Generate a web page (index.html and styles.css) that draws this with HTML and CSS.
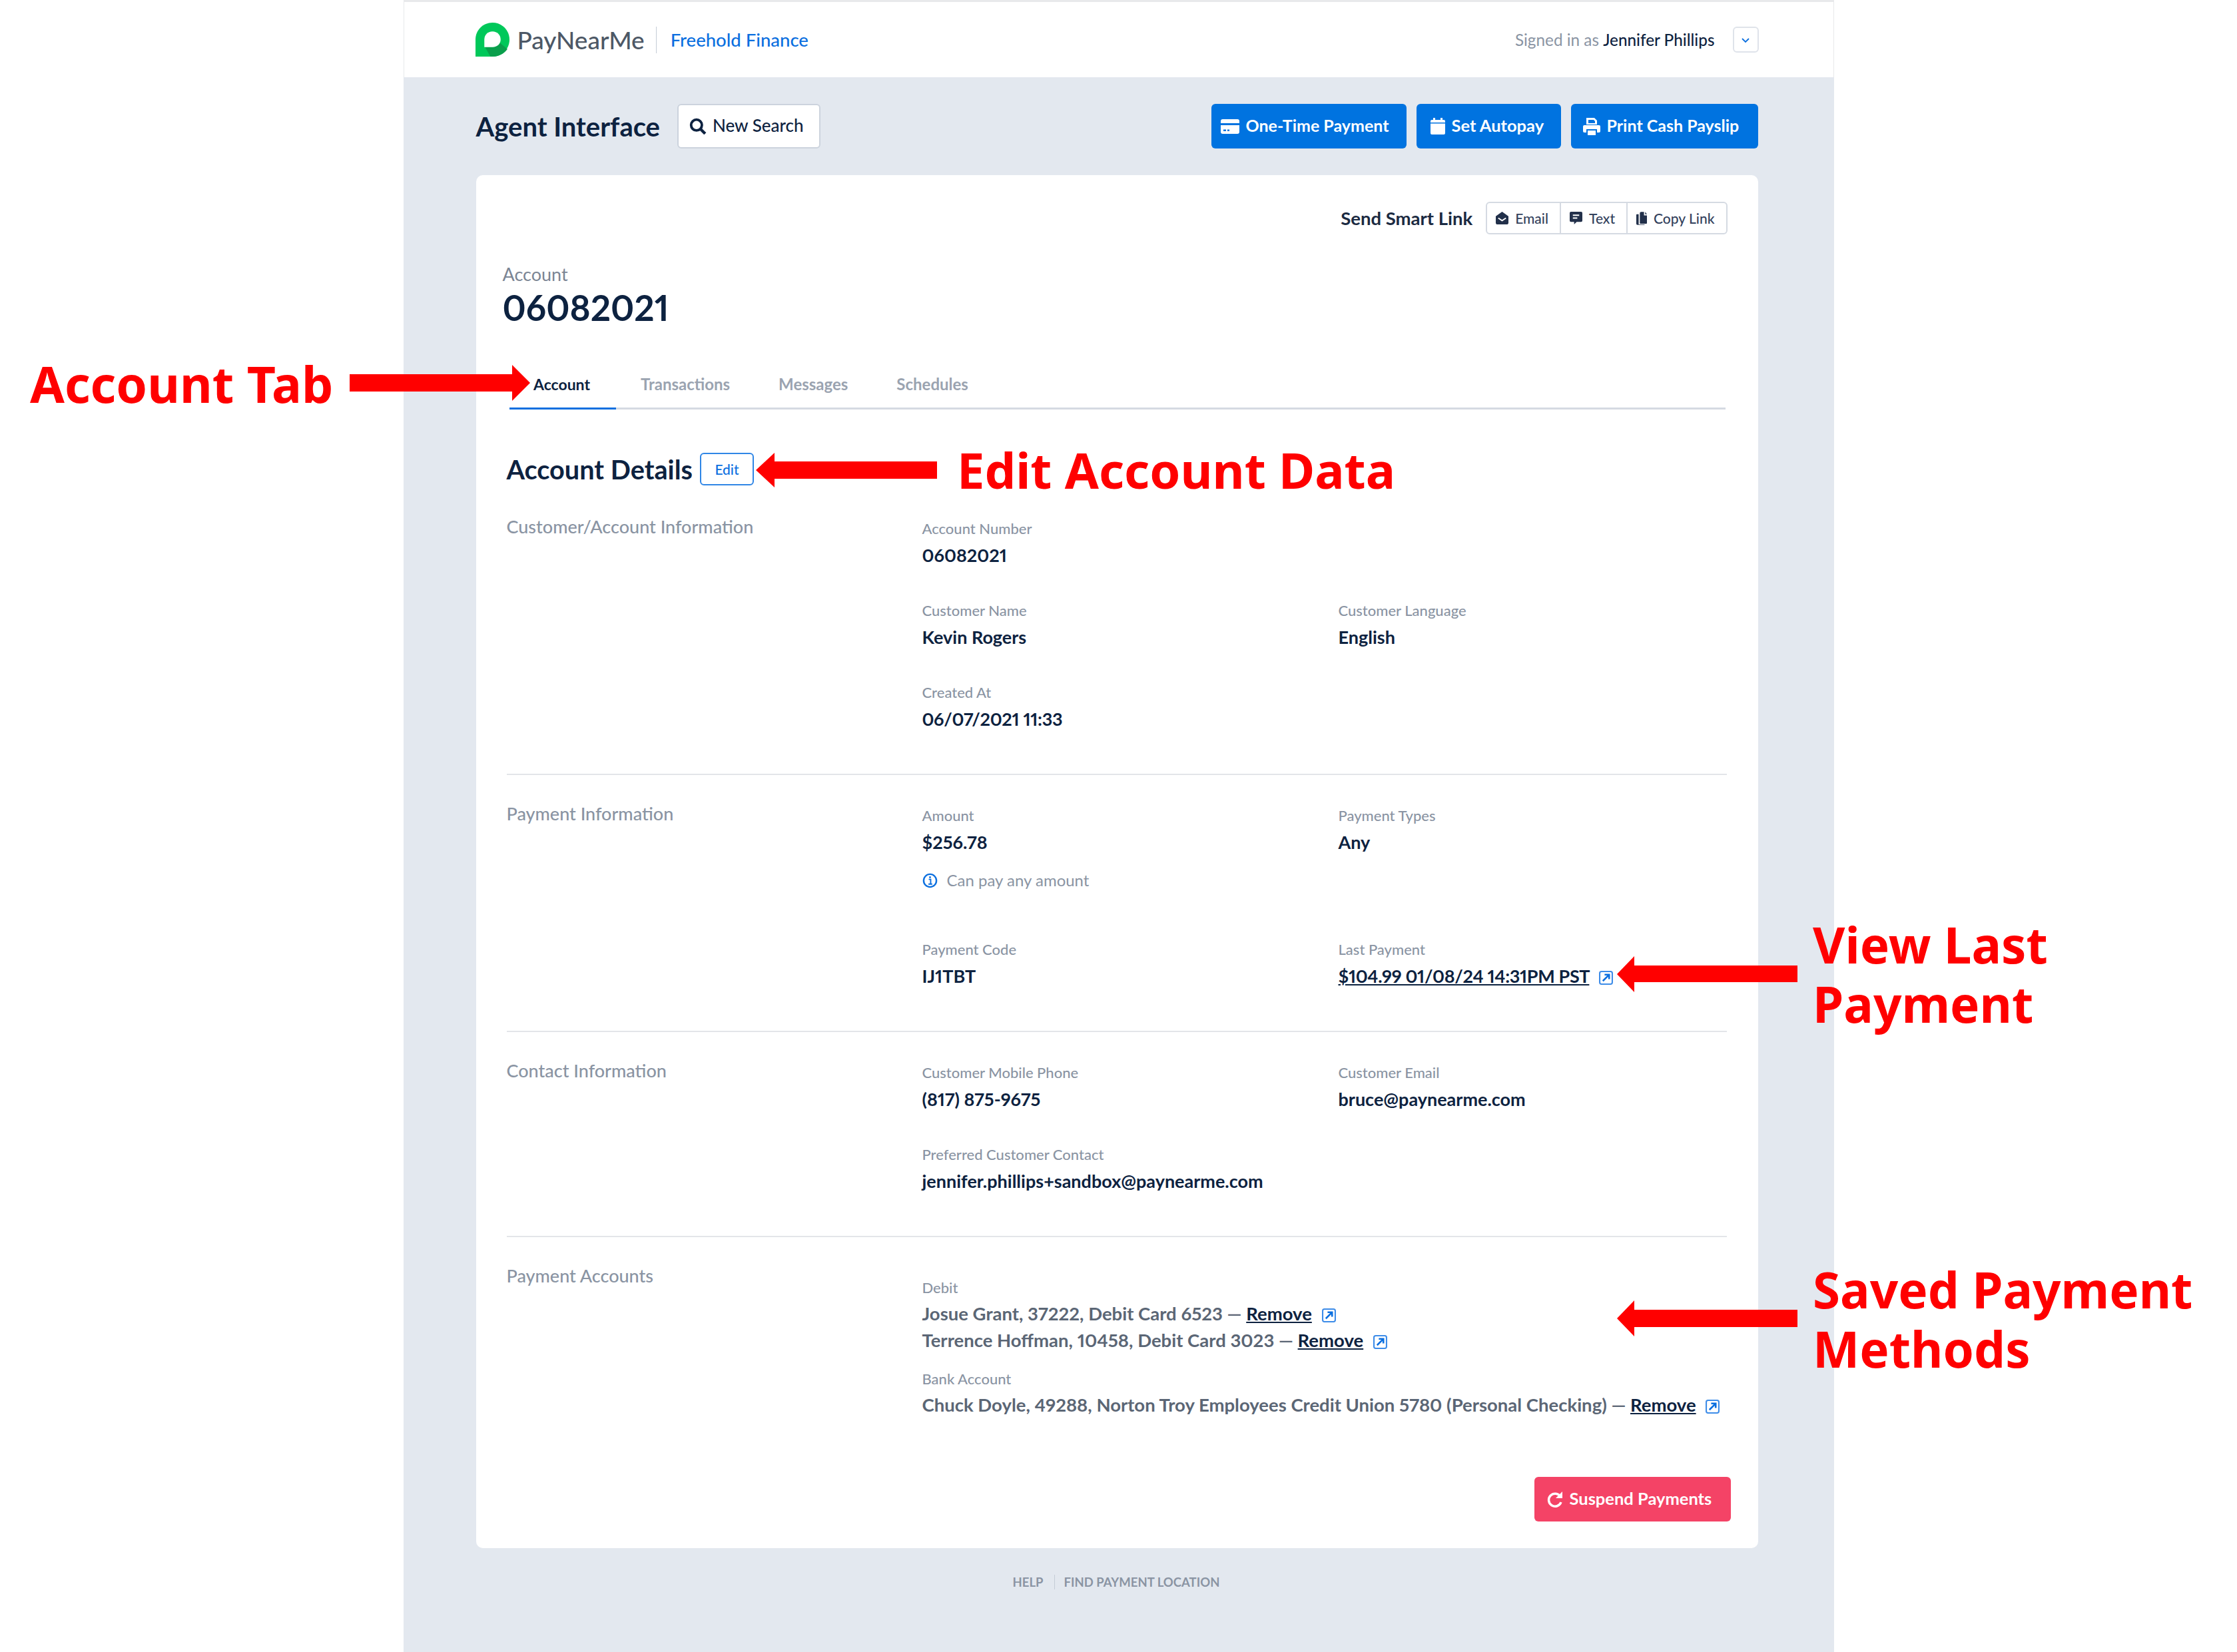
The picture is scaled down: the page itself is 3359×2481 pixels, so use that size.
FILE: index.html
```html
<!DOCTYPE html>
<html lang="en">
  <head>
    <meta charset="UTF-8" />
    <title>PayNearMe Agent Interface</title>
    <link rel="stylesheet" href="styles.css">
  </head>
  <body>
    <div class="app">
      <header class="topbar">
        <div class="brand">
          <svg class="logo" viewBox="0 0 50 50">
            <path fill="#00c85a" d="M25 0C39 0 50 11 50 25C50 39 39 50 25 50H0V25C0 11 11 0 25 0Z"/>
            <path fill="#0a9f4c" d="M14 36H25C30 36 34 34 36 30L47 39C42 46 34 50 25 50H22Z"/>
            <path fill="#fff" d="M13 36V25C13 18 18 13 25 13C32 13 37 18 37 25C37 31 32 36 25 36Z"/>
          </svg>
          <span class="brand-name">PayNearMe</span>
          <span class="brand-client">Freehold Finance</span>
        </div>
        <div class="user">
          <span class="user-text">Signed in as <b>Jennifer Phillips</b></span>
          <button class="chevron-btn">
            <svg viewBox="0 0 12 8" width="12" height="8"><path d="M1 1l5 5 5-5" fill="none" stroke="#0b6fdf" stroke-width="1.800"/></svg>
          </button>
        </div>
      </header>

      <main class="main">
        <div class="actionbar">
          <h1>Agent Interface</h1>
          <button class="btn-white">
            <svg viewBox="0 0 24 24" width="26" height="26"><circle cx="10" cy="10" r="7.500" fill="none" stroke="#0d2240" stroke-width="3.500"/><path d="M15 15l7 7" stroke="#0d2240" stroke-width="4"/></svg>
            <span>New Search</span>
          </button>
          <div class="actions">
            <button class="btn-blue btn-payment">
              <svg viewBox="0 0 28 22" width="28" height="22"><path fill="#fff" d="M3 0h22a3 3 0 013 3v3H0V3a3 3 0 013-3zM0 9h28v10a3 3 0 01-3 3H3a3 3 0 01-3-3zM4 15.500v2.500h4v-2.500zm6 0v2.500h3v-2.500z"/></svg>
              <span>One-Time Payment</span>
            </button>
            <button class="btn-blue btn-autopay">
              <svg viewBox="0 0 22 25" width="22" height="25"><path fill="#fff" d="M4 0h3v3H4zM15 0h3v3h-3zM2 3h18a2 2 0 012 2v2H0V5a2 2 0 012-2zM0 8.500h22V23a2 2 0 01-2 2H2a2 2 0 01-2-2z"/></svg>
              <span>Set Autopay</span>
            </button>
            <button class="btn-blue btn-print">
              <svg viewBox="0 0 26 26" width="26" height="26"><path fill="#fff" d="M5 0h12l4 4v6H5zm3 3v5h10V5l-2-2zM2 11h22a2 2 0 012 2v7a2 2 0 01-2 2h-3v-5H5v5H2a2 2 0 01-2-2v-7a2 2 0 012-2zM7 19h12v7H7z"/></svg>
              <span>Print Cash Payslip</span>
            </button>
          </div>
        </div>

        <section class="card">
          <div class="smart-row">
            <span class="smart-title">Send Smart Link</span>
            <div class="smart-group">
              <button>
                <svg viewBox="0 0 20 20" width="19" height="19"><path fill="#22304a" d="M10 0l10 7v10a3 3 0 01-3 3H3a3 3 0 01-3-3V7z"/><path d="M4 10l6 4 6-4" fill="none" stroke="#fff" stroke-width="2"/></svg>
                Email
              </button>
              <button>
                <svg viewBox="0 0 20 20" width="19" height="19"><path fill="#22304a" d="M2 0h16a2 2 0 012 2v12a2 2 0 01-2 2h-7l-4 4v-4H2a2 2 0 01-2-2V2a2 2 0 012-2z"/><path d="M5 5.500h10M5 10h7" fill="none" stroke="#fff" stroke-width="2"/></svg>
                Text
              </button>
              <button>
                <svg viewBox="0 0 18 22" width="16" height="20"><path fill="#22304a" d="M8 0h5v6h5v13a1 1 0 01-1 1H7a1 1 0 01-1-1V2a2 2 0 012-2zM15 0l3 4h-3zM1 4h3v17h10v1H2a2 2 0 01-2-2V5a1 1 0 011-1z"/></svg>
                Copy Link
              </button>
            </div>
          </div>

          <div class="account-head">
            <div class="account-label">Account</div>
            <div class="account-number">06082021</div>
          </div>

          <nav class="tabs">
            <a class="tab tab-active">Account</a>
            <a class="tab">Transactions</a>
            <a class="tab">Messages</a>
            <a class="tab">Schedules</a>
          </nav>

          <div class="details">
            <div class="details-head">
              <h2>Account Details</h2>
              <button class="btn-edit">Edit</button>
            </div>

            <div class="info info-first">
              <h3>Customer/Account Information</h3>
              <div class="fields">
                <div class="field span-2">
                  <label>Account Number</label>
                  <div class="value">06082021</div>
                </div>
                <div class="field">
                  <label>Customer Name</label>
                  <div class="value">Kevin Rogers</div>
                </div>
                <div class="field">
                  <label>Customer Language</label>
                  <div class="value">English</div>
                </div>
                <div class="field span-2">
                  <label>Created At</label>
                  <div class="value value-date">06/07/2021 11:33</div>
                </div>
              </div>
            </div>

            <div class="info">
              <h3>Payment Information</h3>
              <div class="fields">
                <div class="field">
                  <label>Amount</label>
                  <div class="value">$256.78</div>
                  <div class="note">
                    <svg viewBox="0 0 24 24" width="23" height="23"><circle cx="12" cy="12" r="10" fill="none" stroke="#0b6fdf" stroke-width="2.500"/><path d="M10 10h3v7M9.500 17.500h6" fill="none" stroke="#0b6fdf" stroke-width="2"/><circle cx="12" cy="6.800" r="1.500" fill="#0b6fdf"/></svg>
                    Can pay any amount
                  </div>
                </div>
                <div class="field">
                  <label>Payment Types</label>
                  <div class="value">Any</div>
                </div>
                <div class="field">
                  <label>Payment Code</label>
                  <div class="value">IJ1TBT</div>
                </div>
                <div class="field">
                  <label>Last Payment</label>
                  <div class="value value-date"><a>$104.99 01/08/24 14:31PM PST</a>
                    <svg class="ext" viewBox="0 0 20 20"><use href="#ext"/></svg>
                  </div>
                </div>
              </div>
            </div>

            <div class="info">
              <h3>Contact Information</h3>
              <div class="fields">
                <div class="field">
                  <label>Customer Mobile Phone</label>
                  <div class="value">(817) 875-9675</div>
                </div>
                <div class="field">
                  <label>Customer Email</label>
                  <div class="value">bruce@paynearme.com</div>
                </div>
                <div class="field span-2">
                  <label>Preferred Customer Contact</label>
                  <div class="value">jennifer.phillips+sandbox@paynearme.com</div>
                </div>
              </div>
            </div>

            <div class="info info-last">
              <h3>Payment Accounts</h3>
              <div class="accounts">
                <label>Debit</label>
                <div class="acct acct-first">Josue Grant, 37222, Debit Card 6523 — <a>Remove</a>
                  <svg class="ext" viewBox="0 0 20 20"><use href="#ext"/></svg>
                </div>
                <div class="acct">Terrence Hoffman, 10458, Debit Card 3023 — <a>Remove</a>
                  <svg class="ext" viewBox="0 0 20 20"><use href="#ext"/></svg>
                </div>
                <label class="label-bank">Bank Account</label>
                <div class="acct acct-first">Chuck Doyle, 49288, Norton Troy Employees Credit Union 5780 (Personal Checking) — <a>Remove</a>
                  <svg class="ext" viewBox="0 0 20 20"><use href="#ext"/></svg>
                </div>
              </div>
            </div>
          </div>

          <div class="card-foot">
            <button class="btn-red">
              <svg viewBox="0 0 24 26" width="24" height="26"><path d="M20 8.500A9.500 9.500 0 1021 17" fill="none" stroke="#fff" stroke-width="3.500"/><path fill="#fff" d="M23 1v10H13z"/></svg>
              <span>Suspend Payments</span>
            </button>
          </div>
        </section>

        <footer class="foot">
          <a>HELP</a>
          <a>FIND PAYMENT LOCATION</a>
        </footer>
      </main>
    </div>

    <svg class="defs" width="0" height="0">
      <symbol id="ext" viewBox="0 0 20 20">
        <rect x="1" y="1" width="18" height="18" rx="2.500" fill="none" stroke="#3d8ce8" stroke-width="2"/>
        <path d="M5.500 14.500l8-8M8 5.500h6.500V12" fill="none" stroke="#0b6fdf" stroke-width="2.500"/>
      </symbol>
    </svg>

    <!-- red callouts drawn on top of the screenshot -->
    <div class="callouts">
      <span class="call call-tab">Account Tab</span>
      <span class="call call-edit">Edit Account Data</span>
      <span class="call call-last">View Last<br />Payment</span>
      <span class="call call-saved">Saved Payment<br />Methods</span>
      <svg class="arrows" width="3359" height="2481">
        <polygon points="525,562 769,562 769,548 796,575 769,602 769,588 525,588" />
        <polygon points="1407,693 1163,693 1163,680 1135,706 1163,732 1163,719 1407,719" />
        <polygon points="2699,1450 2454,1450 2454,1436 2428,1463 2454,1490 2454,1475 2699,1475" />
        <polygon points="2699,1967 2454,1967 2454,1953 2428,1980 2454,2007 2454,1993 2699,1993" />
      </svg>
    </div>
  </body>
</html>
```

FILE: styles.css
```css
* {
  box-sizing: border-box;
}
body {
  margin: 0;
  background-color: white;
  font-family: "Lato", "Liberation Sans", sans-serif;
  font-variant-numeric: proportional-nums;
  color: #0d2240;
}
button {
  font-family: inherit;
  font-variant-numeric: inherit;
  cursor: pointer;
}
.app {
  width: 2148px;
  min-height: 2481px;
  margin: 0 auto;
  background-color: #e3e8ef;
}

/* top bar */
.topbar {
  height: 116px;
  padding: 0 112px 0 107px;
  background-color: white;
  border-top: 3px solid #e8e9eb;
  border-left: 1px solid #e8e9eb;
  border-right: 1px solid #e8e9eb;
  display: flex;
  justify-content: space-between;
  align-items: center;
}
.brand {
  display: flex;
  align-items: center;
}
.logo {
  width: 51px;
  height: 51px;
  margin-right: 12px;
}
.brand-name {
  font-size: 37px;
  font-weight: 500;
  color: #4d5866;
  padding-right: 17px;
  border-right: 1px solid #c5ccd6;
  line-height: 40px;
}
.brand-client {
  font-size: 27.500px;
  font-weight: 500;
  color: #0b6fdf;
  margin-left: 21px;
}
.user {
  display: flex;
  align-items: center;
  gap: 27px;
}
.user-text {
  font-size: 24.300px;
  color: #8a94a3;
}
.user-text b {
  font-weight: 500;
  color: #0d2240;
}
.chevron-btn {
  width: 39px;
  height: 39px;
  padding: 0;
  background-color: white;
  border: 2px solid #dfe3ea;
  border-radius: 6px;
}

/* page */
.main {
  padding: 40px 114px 0 109px;
}
.actionbar {
  display: flex;
  align-items: center;
  height: 67px;
}
h1 {
  margin: 0 26px 0 0;
  font-size: 40px;
  font-weight: 700;
}
.btn-white {
  height: 67px;
  width: 215px;
  padding: 0 0 0 16px;
  background-color: white;
  border: 2px solid #ccd3dd;
  border-radius: 6px;
  color: #0d2240;
  font-size: 26px;
  font-weight: 500;
  display: flex;
  align-items: center;
  gap: 9px;
}
.btn-white span,
.btn-blue span,
.btn-red span {
  margin-top: -3px;
}
.actions {
  margin-left: auto;
  display: flex;
  gap: 15px;
}
.btn-blue,
.btn-red {
  height: 67px;
  padding: 0 0 0 14px;
  border: none;
  border-radius: 6px;
  background-color: #0073e0;
  color: white;
  font-size: 25px;
  font-weight: 700;
  display: flex;
  align-items: center;
  gap: 10px;
}
.btn-payment {
  width: 293px;
}
.btn-autopay {
  width: 217px;
  padding-left: 21px;
  font-size: 25.500px;
}
.btn-print {
  width: 281px;
  padding-left: 18px;
}
.btn-red {
  width: 295px;
  padding-left: 19px;
  font-size: 25.500px;
  background-color: #f44366;
}

/* card */
.card {
  margin-top: 40px;
  padding: 40px 41px 40px 40px;
  background-color: white;
  border-radius: 10px;
}
.smart-row {
  display: flex;
  justify-content: flex-end;
  align-items: center;
  gap: 20px;
  padding-right: 5px;
}
.smart-title {
  font-size: 27.500px;
  font-weight: 700;
  color: #1b2a41;
}
.smart-group {
  display: flex;
  height: 49px;
  border: 2px solid #d5dae2;
  border-radius: 6px;
}
.smart-group button {
  padding: 0 17px 0 13px;
  background: none;
  border: none;
  border-right: 2px solid #d5dae2;
  font-size: 21px;
  font-weight: 500;
  color: #33415c;
  display: flex;
  align-items: center;
  gap: 10px;
}
.smart-group button:last-child {
  border-right: none;
}
.account-head {
  margin-top: 45px;
}
.account-label {
  font-size: 27px;
  line-height: 30px;
  color: #7b8594;
}
.account-number {
  margin-top: 5px;
  font-size: 53px;
  line-height: 60px;
  font-weight: 700;
}
.tabs {
  margin: 47px 8px 0 10px;
  display: flex;
  border-bottom: 3px solid #d5dae2;
}
.tab {
  padding: 23px 36.500px 20px;
  margin-bottom: -3px;
  font-size: 24px;
  line-height: 30px;
  font-weight: 700;
  color: #9aa3b0;
  border-bottom: 3px solid transparent;
}
.tab-active {
  padding-right: 39.500px;
  font-size: 23px;
  color: #0d2240;
  border-bottom-color: #0b6fdf;
}

/* details */
.details {
  margin: 67px 6px 0 6px;
}
.details-head {
  display: flex;
  align-items: center;
  gap: 11px;
  height: 49px;
  margin-top: -2px;
  margin-bottom: 2px;
}
h2 {
  margin: 0;
  font-size: 39.700px;
  font-weight: 700;
}
.btn-edit {
  width: 81px;
  height: 49px;
  padding: 0;
  background-color: white;
  border: 2px solid #2f86e6;
  border-radius: 6px;
  color: #0b6fdf;
  font-size: 21px;
  font-weight: 500;
}
.info {
  padding: 46px 0 67px;
  display: flex;
  border-bottom: 2px solid #e3e5e9;
}
.info-first {
  padding-top: 48px;
}
.info-last {
  padding-bottom: 0;
  border-bottom: none;
}
h3 {
  width: 624px;
  flex-shrink: 0;
  margin: -3px 0 0;
  font-size: 27px;
  line-height: 30px;
  font-weight: 500;
  color: #8a94a3;
}
.fields {
  flex: 1;
  display: grid;
  grid-template-columns: 625px 1fr;
  row-gap: 53px;
}
.span-2 {
  grid-column: span 2;
}
label {
  display: block;
  font-size: 22px;
  line-height: 30px;
  font-weight: 500;
  color: #8a94a3;
}
.value {
  margin-top: 10px;
  font-size: 27px;
  line-height: 30px;
  font-weight: 700;
}
.value-date {
  letter-spacing: -0.350px;
}
.value a {
  text-decoration: underline;
}
.note {
  margin: 27px 0 21px;
  font-size: 24px;
  line-height: 30px;
  color: #8a94a3;
  display: flex;
  align-items: center;
  gap: 14px;
}
.ext {
  width: 21px;
  height: 21px;
  margin-left: 8px;
  vertical-align: -3px;
}
.defs {
  position: absolute;
}
.accounts {
  margin-top: 15px;
}
.acct {
  font-size: 27.500px;
  line-height: 40px;
  font-weight: 700;
  color: #5b6675;
}
.acct a {
  color: #0d2240;
  text-decoration: underline;
}
.acct-first {
  margin-top: 4px;
}
.label-bank {
  margin-top: 23px;
}
.card-foot {
  margin-top: 88px;
  display: flex;
  justify-content: flex-end;
}
.foot {
  margin-top: 40px;
  display: flex;
  justify-content: center;
  font-size: 18.500px;
  font-weight: 700;
  color: #8a94a3;
}
.foot a {
  padding: 0 16px 0 14px;
}
.foot a:first-child {
  border-right: 1px solid #c5ccd6;
}

/* callouts */
.callouts {
  position: absolute;
  top: 0;
  left: 0;
  width: 3359px;
  height: 2481px;
  pointer-events: none;
}
.arrows {
  position: absolute;
  top: 0;
  left: 0;
}
.arrows polygon {
  fill: #ff0000;
}
.call {
  position: absolute;
  font-family: "Noto Sans", "DejaVu Sans", sans-serif;
  font-weight: 700;
  font-size: 74.500px;
  line-height: 89px;
  color: #ff0000;
  white-space: nowrap;
}
.call-tab {
  left: 45px;
  top: 532px;
  font-size: 75px;
}
.call-edit {
  left: 1437px;
  top: 661px;
  font-size: 74px;
}
.call-last {
  left: 2722px;
  top: 1374px;
}
.call-saved {
  left: 2722px;
  top: 1892px;
}
```
